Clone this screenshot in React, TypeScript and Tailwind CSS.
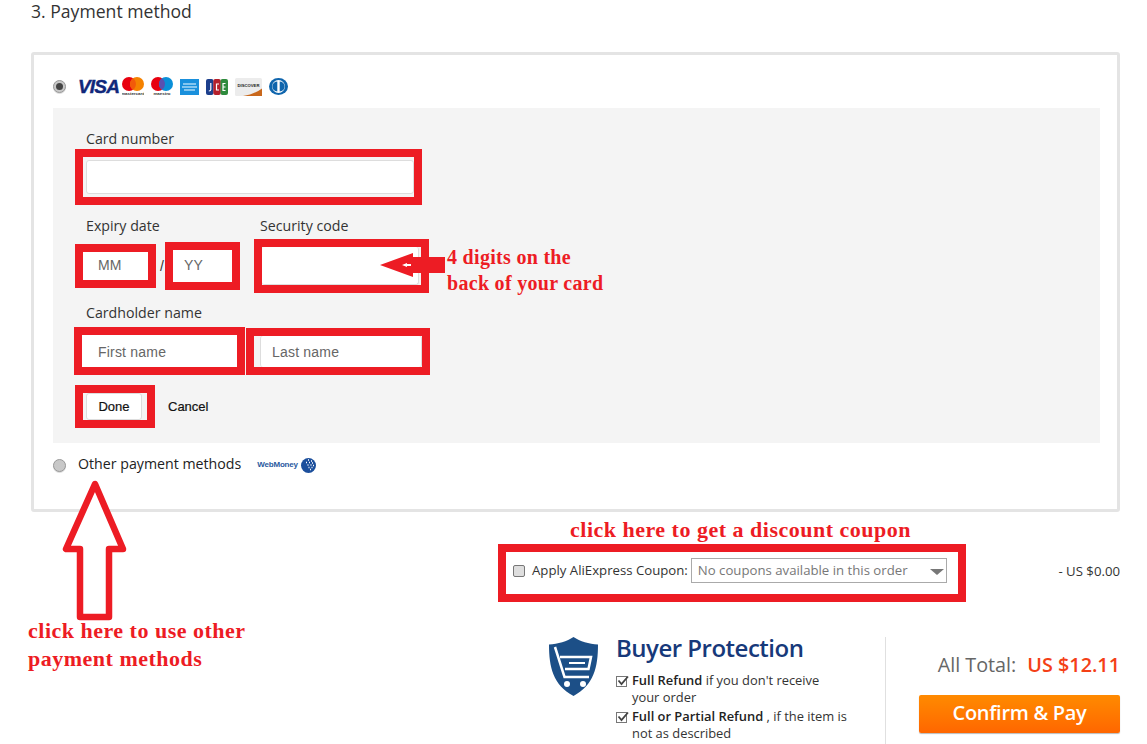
import React from "react"

const open = "font-['Open_Sans',sans-serif]"
const arial = "font-['Liberation_Sans',Arial,sans-serif]"
const note = "absolute font-['Liberation_Serif',serif] font-bold text-[#ed1c24] whitespace-nowrap"

const Radio = ({ checked }: { checked?: boolean }) => (
    <span className="flex size-[13px] items-center justify-center rounded-full border border-[#999] bg-[#c8c8c8] shadow-[0_1px_0_#ddd]">
        {checked && <span className="size-[7px] rounded-full bg-[#444]" />}
    </span>
)

const CardLogos = () => (
    <div className="flex items-center">
        <span className="w-[44px] font-['Liberation_Sans',sans-serif] text-[19px] leading-none font-bold tracking-[-0.8px] text-[#10277a] italic [-webkit-text-stroke:0.4px_#10277a]">
            VISA
        </span>
        <svg width="22" height="19" viewBox="0 0 22 19">
            <circle cx="7" cy="7" r="7" fill="#e8000f" />
            <circle cx="15" cy="7" r="7" fill="#f58200" />
            <path d="M11 1.3a7 7 0 0 1 0 11.4a7 7 0 0 1 0-11.4z" fill="#f25a0a" />
            <text x="11" y="18" fontSize="4.4" fontWeight="700" textAnchor="middle" fill="#333" fontFamily="Liberation Sans">mastercard</text>
        </svg>
        <svg className="ml-[7px]" width="22" height="19" viewBox="0 0 22 19">
            <circle cx="7" cy="7" r="7" fill="#e8000f" />
            <circle cx="15" cy="7" r="7" fill="#0a8fd8" />
            <path d="M11 1.3a7 7 0 0 1 0 11.4a7 7 0 0 1 0-11.4z" fill="#5a50b0" />
            <text x="11" y="18" fontSize="4.4" fontWeight="700" textAnchor="middle" fill="#333" fontFamily="Liberation Sans">maestro</text>
        </svg>
        <svg className="ml-[7px]" width="19" height="16" viewBox="0 0 19 16">
            <rect width="19" height="16" fill="#1a90dc" />
            <path d="M3 5h13M2 8h15M4 11h11" stroke="#a9d8f5" strokeWidth="1.4" />
        </svg>
        <svg className="ml-[7px]" width="22" height="16" viewBox="0 0 22 16">
            <rect x="0" width="7.500" height="16" rx="2" fill="#1c3f8c" />
            <rect x="7.300" width="7.500" height="16" rx="2" fill="#b5202b" />
            <rect x="14.500" width="7.500" height="16" rx="2" fill="#2e8b3d" />
            <path d="M4.800 4v6.500q0 1.500-2 1.500M13 5h-2.500v6H13M17 4.500h2.500M17 8h2.500M17 11.500h2.500M17 4v8" fill="none" stroke="#fff" strokeWidth="1.200" />
        </svg>
        <svg className="ml-[7px]" width="27" height="18" viewBox="0 0 27 18">
            <rect width="27" height="18" rx="1.5" fill="#ececec" />
            <path d="M27 10.500V18H8c8-1 14-4 19-7.500z" fill="#c9681c" />
            <text x="13.500" y="9" fontSize="4.200" fontWeight="700" textAnchor="middle" fill="#222" fontFamily="Liberation Sans">DISCOVER</text>
        </svg>
        <svg className="ml-[7px]" width="19" height="17" viewBox="0 0 19 17">
            <ellipse cx="9.500" cy="8.500" rx="9.500" ry="8.500" fill="#0f65ad" />
            <circle cx="9.500" cy="8.500" r="6.500" fill="#fff" />
            <path d="M8.300 3.500a5 5 0 0 0 0 10zM10.700 3.500a5 5 0 0 1 0 10z" fill="#0f65ad" />
        </svg>
    </div>
)

const Shield = () => (
    <svg width="49" height="59" viewBox="0 0 49 59">
        <path d="M24.500 0C18 4.500 9 7 0 7.500C0 30 4 48 24.500 59C45 48 49 30 49 7.500C40 7 31 4.500 24.500 0z" fill="#1c4f87" />
        <path d="M6 10L15.500 40H40" fill="none" stroke="#fff" strokeWidth="2.500" />
        <path d="M11 20H42L39.500 32H16" fill="none" stroke="#fff" strokeWidth="2.500" />
        <path d="M20 26h16" stroke="#fff" strokeWidth="2" />
        <circle cx="18" cy="47" r="3" fill="#fff" />
        <circle cx="34" cy="47" r="3" fill="#fff" />
    </svg>
)

const Tick = () => (
    <svg className="mt-[3px] shrink-0" width="13" height="12" viewBox="0 0 13 12">
        <rect x="0.500" y="1.500" width="10" height="10" fill="none" stroke="#777" />
        <path d="M2.500 5.500l3 3.500L12 1.500" fill="none" stroke="#444" strokeWidth="1.800" />
    </svg>
)

export default function App() {
    return (
        <div className={`relative h-[744px] overflow-hidden bg-white text-[#333] ${open}`}>
            <h2 className="-mt-px h-[53px] pl-[31px] text-[17.600px] leading-[24px] text-[#333]">3. Payment method</h2>

            <div className="mr-[27px] ml-[31px] h-[460px] rounded-[3px] border-[3px] border-[#e4e4e4]">
                <div className="flex h-[53px] items-center gap-[12px] pt-[10px] pl-[19px]">
                    <Radio checked />
                    <CardLogos />
                </div>

                <div className="mr-[17px] ml-[19px] h-[335px] bg-[#f4f4f4] pt-[21px] pl-[22px] text-[14.200px]">
                    <div className="h-[20px] pl-[11px] leading-[19px]">Card number</div>
                    <div className="h-[56px] w-[347px] border-[8px] border-[#ed1c24] p-[3px]">
                        <div className="h-full w-[328px] rounded-[3px] border border-[#ddd] bg-white" />
                    </div>

                    <div className="mt-[11px] flex h-[20px] leading-[19px]">
                        <span className="w-[185px] pl-[11px]">Expiry date</span>
                        <span>Security code</span>
                    </div>
                    <div className={`mt-[3px] flex h-[54px] items-center text-[14px] tracking-[0.1px] text-[#666] ${arial}`}>
                        <div className="flex h-[44px] w-[81px] items-center border-[8px] border-[#ed1c24] bg-white pb-[1px] pl-[15px]">MM</div>
                        <span className="w-[9px] pl-[4px] text-[#333]">/</span>
                        <div className="flex h-[48px] w-[75px] items-center border-[8px] border-[#ed1c24] bg-white pb-[1px] pl-[11px]">YY</div>
                        <div className="ml-[14px] h-[54px] w-[175px] border-[8px] border-[#ed1c24] bg-[#f4f4f4]">
                            <div className="h-full w-[157px] rounded-[3px] border-r border-b border-[#ddd] bg-white" />
                        </div>
                    </div>

                    <div className="mt-[10px] h-[20px] pl-[11px] leading-[19px]">Cardholder name</div>
                    <div className={`mt-[4px] flex h-[48px] items-center gap-[1px] text-[14px] tracking-[0.2px] text-[#666] ${arial}`}>
                        <div className="-ml-px flex h-[48px] w-[171px] items-center border-[8px] border-[#ed1c24] bg-white pt-[2px] pl-[16px]">First name</div>
                        <div className="flex h-[47px] w-[184px] items-center border-[8px] border-[#ed1c24] bg-[#f4f4f4] pl-[6px]">
                            <div className="flex h-full w-[162px] items-center rounded-[3px] border-x border-[#ddd] bg-white pt-[2px] pl-[11px]">Last name</div>
                        </div>
                    </div>

                    <div className={`mt-[10px] flex h-[43px] items-center text-[13px] text-[#111] [-webkit-text-stroke:0.2px_#111] ${arial}`}>
                        <div className="h-[43px] w-[80px] border-[8px] border-[#ed1c24] bg-[#f4f4f4] pl-[3px]">
                            <div className="flex h-full w-[56px] items-center justify-center rounded-[3px] border border-[#ddd] bg-white">Done</div>
                        </div>
                        <span className="ml-[13px]">Cancel</span>
                    </div>
                </div>

                <div className="flex h-[44px] items-center pl-[19px] text-[14.200px]">
                    <Radio />
                    <span className="ml-[12px] pb-[3px] text-[#222]">Other payment methods</span>
                    <span className={`ml-[16px] pb-[1px] text-[8px] font-bold tracking-[-0.2px] text-[#2a5aa0] ${arial}`}>WebMoney</span>
                    <svg className="ml-[3px]" width="15" height="15" viewBox="0 0 15 15">
                        <circle cx="7.500" cy="7.500" r="7.500" fill="#1c4f9c" />
                        <path d="M7 2h1M10 3h1M5 4.500h1M8 4.500h1M11 5h1M6.500 7h1M9.500 7h1M12 7.500h1M7.500 9.500h1M10.500 9.500h1M9 11.500h1" stroke="#fff" strokeWidth="1.300" />
                    </svg>
                </div>
            </div>

            <div className="mt-[32px] flex h-[58px] items-center pr-[27px] pl-[498px] text-[13.200px]">
                <div className="flex h-[58px] w-[468px] items-center border-[8px] border-[#ed1c24] pb-[5px] pl-[7px]">
                    <span className="size-[12px] shrink-0 rounded-[2px] border border-[#777] bg-[#dedede]" />
                    <span className="ml-[7px] whitespace-nowrap">Apply AliExpress Coupon:</span>
                    <div className="ml-[3px] flex h-[25px] w-[256px] shrink-0 items-center justify-between border border-[#aaa] pr-[2px] pl-[6px] text-[#777]">
                        <span className="whitespace-nowrap">No coupons available in this order</span>
                        <svg className="mt-[3px]" width="14" height="6" viewBox="0 0 14 6">
                            <path d="M0 0h14L7 6z" fill="#777" />
                        </svg>
                    </div>
                </div>
                <span className="ml-auto pb-[2px]">- US $0.00</span>
            </div>

            <div className="mt-[35px] flex pl-[549px]">
                <Shield />
                <div className="ml-[18px] w-[269px]">
                    <div className="-mt-[2px] text-[24px] leading-[26px] font-semibold tracking-[-0.5px] text-[#17397a]">Buyer Protection</div>
                    <div className="mt-[11px] text-[12.900px] leading-[17px]">
                        <div className="flex gap-[3px]">
                            <Tick />
                            <span className="w-[200px]">
                                <b className="font-semibold text-[#222]">Full Refund</b> if you don't receive your order
                            </span>
                        </div>
                        <div className="mt-[2px] flex gap-[3px]">
                            <Tick />
                            <span className="w-[224px]">
                                <b className="font-semibold text-[#222]">Full or Partial Refund</b> , if the item is not as described
                            </span>
                        </div>
                    </div>
                </div>
                <div className="h-[107px] w-[235px] border-l border-[#e0e0e0] pl-[33px]">
                    <div className="mt-[14px] flex h-[27px] items-center justify-end gap-[11px] text-[19.800px] whitespace-nowrap">
                        <span className="text-[#666]">All Total:</span>
                        <span className="font-semibold text-[#f44016]">US $12.11</span>
                    </div>
                    <div className="mt-[17px] flex h-[38px] items-center justify-center rounded-[2px] bg-gradient-to-b from-[#ff8a00] to-[#ff6600] pb-[2px] text-[20px] font-semibold tracking-[-0.3px] text-white shadow-[0_1px_1px_#bbb]">
                        Confirm &amp; Pay
                    </div>
                </div>
            </div>

            <svg className="absolute top-[476px] left-[60px]" width="70" height="148" viewBox="60 476 70 148">
                <path d="M95 484L66 549H80V617H109V549H123Z" fill="#fff" stroke="#ed1c24" strokeWidth="6.500" strokeLinejoin="round" />
            </svg>
            <svg className="absolute top-[252px] left-[378px]" width="68" height="27" viewBox="378 252 68 27">
                <path d="M380 265L413 253V257H445V273H413V277Z" fill="#ed1c24" />
                <path d="M402 265L407 263V267Z M407 264h4v2h-4z" fill="#fff" />
            </svg>

            <div className={`${note} top-[244px] left-[447px] text-[20px] leading-[26px] tracking-[0.3px]`}>
                4 digits on the
                <br />
                back of your card
            </div>
            <div className={`${note} top-[516px] left-[570px] text-[22px] leading-[28px] tracking-[0.5px]`}>click here to get a discount coupon</div>
            <div className={`${note} top-[617px] left-[28px] text-[22px] leading-[28px] tracking-[0.5px]`}>
                click here to use other
                <br />
                payment methods
            </div>
        </div>
    )
}
